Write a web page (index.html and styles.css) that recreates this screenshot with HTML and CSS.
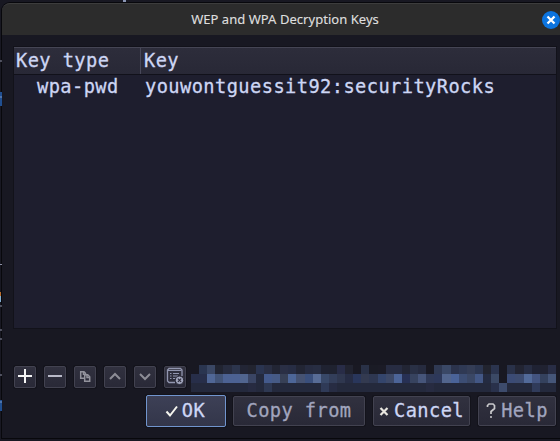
FILE: index.html
```
<!DOCTYPE html>
<html lang="en">
<head>
<meta charset="utf-8">
<title>WEP and WPA Decryption Keys</title>
<link rel="stylesheet" href="styles.css">
</head>
<body>
<svg class="backdrop" width="560" height="441" aria-hidden="true">
  <path d="M0 61h2M0 264.500h2M0 306h2M0 330h2M0 339h2M0 375h2" stroke="#8d90a5"/>
  <path d="M0 92h2v14H0zM0 400h2v11H0z" fill="#204f91"/>
  <path d="M0 97h2M0 402h2" stroke="#7898c8"/>
  <path d="M0 292h1v4H0z" fill="#b86b2b"/><path d="M0 296h1v6H0z" fill="#83afd2"/>
  <path d="M123 0h3v2h-3z" fill="#8b96b4"/>
</svg>
<main class="dialog">
  <header class="titlebar">
    <h1>WEP and WPA Decryption Keys</h1>
    <button class="close" aria-label="Close"><svg width="18" height="18"><circle cx="9" cy="9" r="9" fill="#0c74df"/><path d="M5.500 5.500l7 7m0-7l-7 7" stroke="#fff" stroke-width="2.300"/></svg></button>
  </header>
  <section class="keys">
    <div class="row head"><span>Key type</span><span>Key</span></div>
    <div class="row entry"><span>wpa-pwd</span><span>youwontguessit92:securityRocks</span></div>
  </section>
  <div class="tools">
    <button class="tool" aria-label="Add"><svg width="20" height="20"><path d="M3 9h14M10 2v14" stroke="#f5f5f5" stroke-width="2"/></svg></button>
    <button class="tool" aria-label="Remove"><svg width="20" height="20"><path d="M3 9h14" stroke="#b9bac8" stroke-width="2"/></svg></button>
    <button class="tool" aria-label="Copy"><svg width="20" height="20" fill="none" stroke="#92929c" stroke-width="1.500"><path d="M9 11.200H5.700V4.700H9l1.500 1.500v2"/><path d="M9.700 7.700h3l2 2v4.500h-5z"/><path d="M12 8v2.500h2.500M8.500 5v2.200h2"/></svg></button>
    <button class="tool" aria-label="Move up"><svg width="20" height="20"><path d="M5 12l5-5 5 5" fill="none" stroke="#8d8d96" stroke-width="2"/></svg></button>
    <button class="tool" aria-label="Move down"><svg width="20" height="20"><path d="M5 7l5 5 5-5" fill="none" stroke="#8d8d96" stroke-width="2"/></svg></button>
    <button class="tool" aria-label="Clear"><svg width="20" height="20" fill="none" stroke="#9296af"><path d="M10 15.500H4L2.500 14V3L4 1.500h11.500L17 3v6" stroke-width="1.300"/><path d="M3 3.500h13.500M5 6.500h1.500m1.500 0h6M5 9h1.500m1.500 0h5M5 11.500h1.500m1.500 0h2"/><circle cx="14.500" cy="13.300" r="4.200" fill="#a1a5bc" stroke="#2b2b39"/><path d="M12.900 11.700l3.200 3.200m0-3.200l-3.200 3.200" stroke="#2b2b39" stroke-width="1.200"/></svg></button>
    <div class="mosaic" id="mosaic"></div>
  </div>
  <footer class="actions">
    <button class="action ok"><svg width="14" height="14"><path d="M1.500 7.500l3.500 4 7-9" fill="none" stroke="#f5f5ee" stroke-width="2"/></svg><span>OK</span></button>
    <button class="action copy dim"><span>Copy from</span></button>
    <button class="action cancel"><svg width="10" height="14"><path d="M1.500 4l7 7m0-7l-7 7" stroke="#e8e6df" stroke-width="2.200"/></svg><span>Cancel</span></button>
    <button class="action help dim"><svg width="10" height="16"><path d="M1.500 4V2.500L3 1h4l1.500 1.500v3L5 8.500V11M4 14h2" fill="none" stroke="#c9c9cc" stroke-width="1.700"/></svg><span>Help</span></button>
  </footer>
</main>
<script src="mosaic.js"></script>
</body>
</html>
```
FILE: mosaic.js
```
// Colours of the redacted status field, row by row.
const rows = [
  "181822 2a3550 3a4764 212431 272c3f 2c354d 222535 222430 2a3450 292e43 222534 2a2f45 272d44 222534 262b40 272d42 1f2231 1f2230 282c47 212330 191923 293147 1a1b25 1b1b26 272c42 272c42 222534 293045 262b3f 191923 2f3953 3a4866 2b334c 2f3954 343d56 2c3650 22242f 2b344e 181822 293149 222432 272d43 1f2233 202231 282d45",
  "272e49 272e49 506796 425478 4c6293 4c6293 51658f 3a4564 242a3e 445a8c 465a85 374056 4d6698 455272 3a4f7c 586c96 384868 333e5a 2f374f 262c44 29365b 333a50 2e3751 34456c 3d4968 4c6498 273054 37435f 46557a 2f3957 2d385a 52658d 4a6398 3c4d73 3a4765 435785 242b41 3b4965 181822 3b4b75 3d4c71 526a99 435480 34415d 455679",
  "24293c 24293c 24293c 24293c 24293c 24293c 24293c 272b41 24293c 2e3852 24293c 24293c 24293c 24293c 24293c 24293c 2f3a57 272c43 24293c 24293c 24293c 24293c 24293c 24293c 24293c 24293c 24293c 24293c 24293c 272b41 24293c 24293c 24293c 24293c 24293c 24293c 24293c 29314b 3d4b6c 24293c 24293c 24293c 303b5a 24293c 24293c"
];
const mosaic = document.getElementById("mosaic");
rows.join(" ").split(" ").forEach(colour => {
  const cell = document.createElement("i");
  cell.style.background = "#" + colour;
  mosaic.append(cell);
});
```
FILE: styles.css
```
* { box-sizing: border-box; }
body {
  margin: 0;
  padding: 3px 0 0 2px;
  width: 560px;
  height: 441px;
  overflow: hidden;
  background: #181822;
  font: 18.7px/26px "DejaVu Sans Mono", monospace;
  letter-spacing: .42px;
  -webkit-text-stroke: .3px;
  color: #cdd6f4;
}
.backdrop { position: absolute; left: 0; top: 0; }
.dialog {
  height: 435px;
  background: #181822;
  border-radius: 8px 0 0 0;
  box-shadow: 0 0 0 1px #08080c;
}
.titlebar {
  display: flex;
  height: 32px;
  align-items: center;
  background: #2c2c2c;
  border-radius: 8px 0 0 0;
  border-top: 1px solid #3d3d3d;
}
h1 {
  flex: 1;
  margin: 0 0 2px 26px;
  text-align: center;
  font: 13px/20px "Noto Sans", sans-serif;
  letter-spacing: .04px;
  -webkit-text-stroke: .15px;
  color: #dedede;
}
button { font: inherit; letter-spacing: inherit; color: inherit; padding: 0; }
.close { width: 18px; height: 18px; border: 0; background: none; }
svg { display: block; flex: none; }
.keys {
  margin: 11px 3px 0 11px;
  height: 283px;
  border: 1px solid #12121a;
  background: #1e1e2e;
}
.row { display: grid; grid-template-columns: 126px 1fr; }
.head {
  height: 28px;
  border-top: 1px solid #454554;
  border-bottom: 1px solid #11111a;
  background: linear-gradient(#2d2d3b, #282836);
}
.head span { padding-left: 2px; }
.head span + span { border-left: 1px solid #48485a; padding-left: 3px; }
.entry span { line-height: 24px; padding-left: 23px; }
.entry span + span { padding-left: 5px; }
.tools { display: flex; gap: 8px; height: 27px; margin: 36px 4px 0 12px; align-items: center; }
.tool {
  width: 22px;
  height: 22px;
  margin-top: -4px;
  border: 1px solid #424250;
  border-radius: 2px;
  background: linear-gradient(#31313f, #292937);
  box-shadow: 0 0 0 1px #13131b;
}
.mosaic {
  display: grid;
  grid-template: repeat(3, 9px) / repeat(45, 1fr);
  width: 365px;
  height: 27px;
  margin-left: -3px;
}
.actions { display: flex; height: 32px; margin: 3px 4px 0 144px; align-items: center; }
.action {
  display: flex;
  align-items: center;
  justify-content: center;
  height: 30px;
  border: 1px solid #424250;
  border-radius: 2px;
  background: linear-gradient(#31313f, #292937);
  box-shadow: 0 0 0 1px #13131b;
  white-space: nowrap;
}
.ok { width: 80px; height: 32px; gap: 3px; padding-right: 2px; border-color: #7195ce; background: linear-gradient(#3d4056, #33364a); }
.copy { width: 132px; margin-left: 7px; }
.cancel { width: 97px; margin-left: 8px; gap: 5px; }
.help { width: 78px; margin-left: 8px; gap: 5px; }
.dim { color: #a1a5be; }
```
